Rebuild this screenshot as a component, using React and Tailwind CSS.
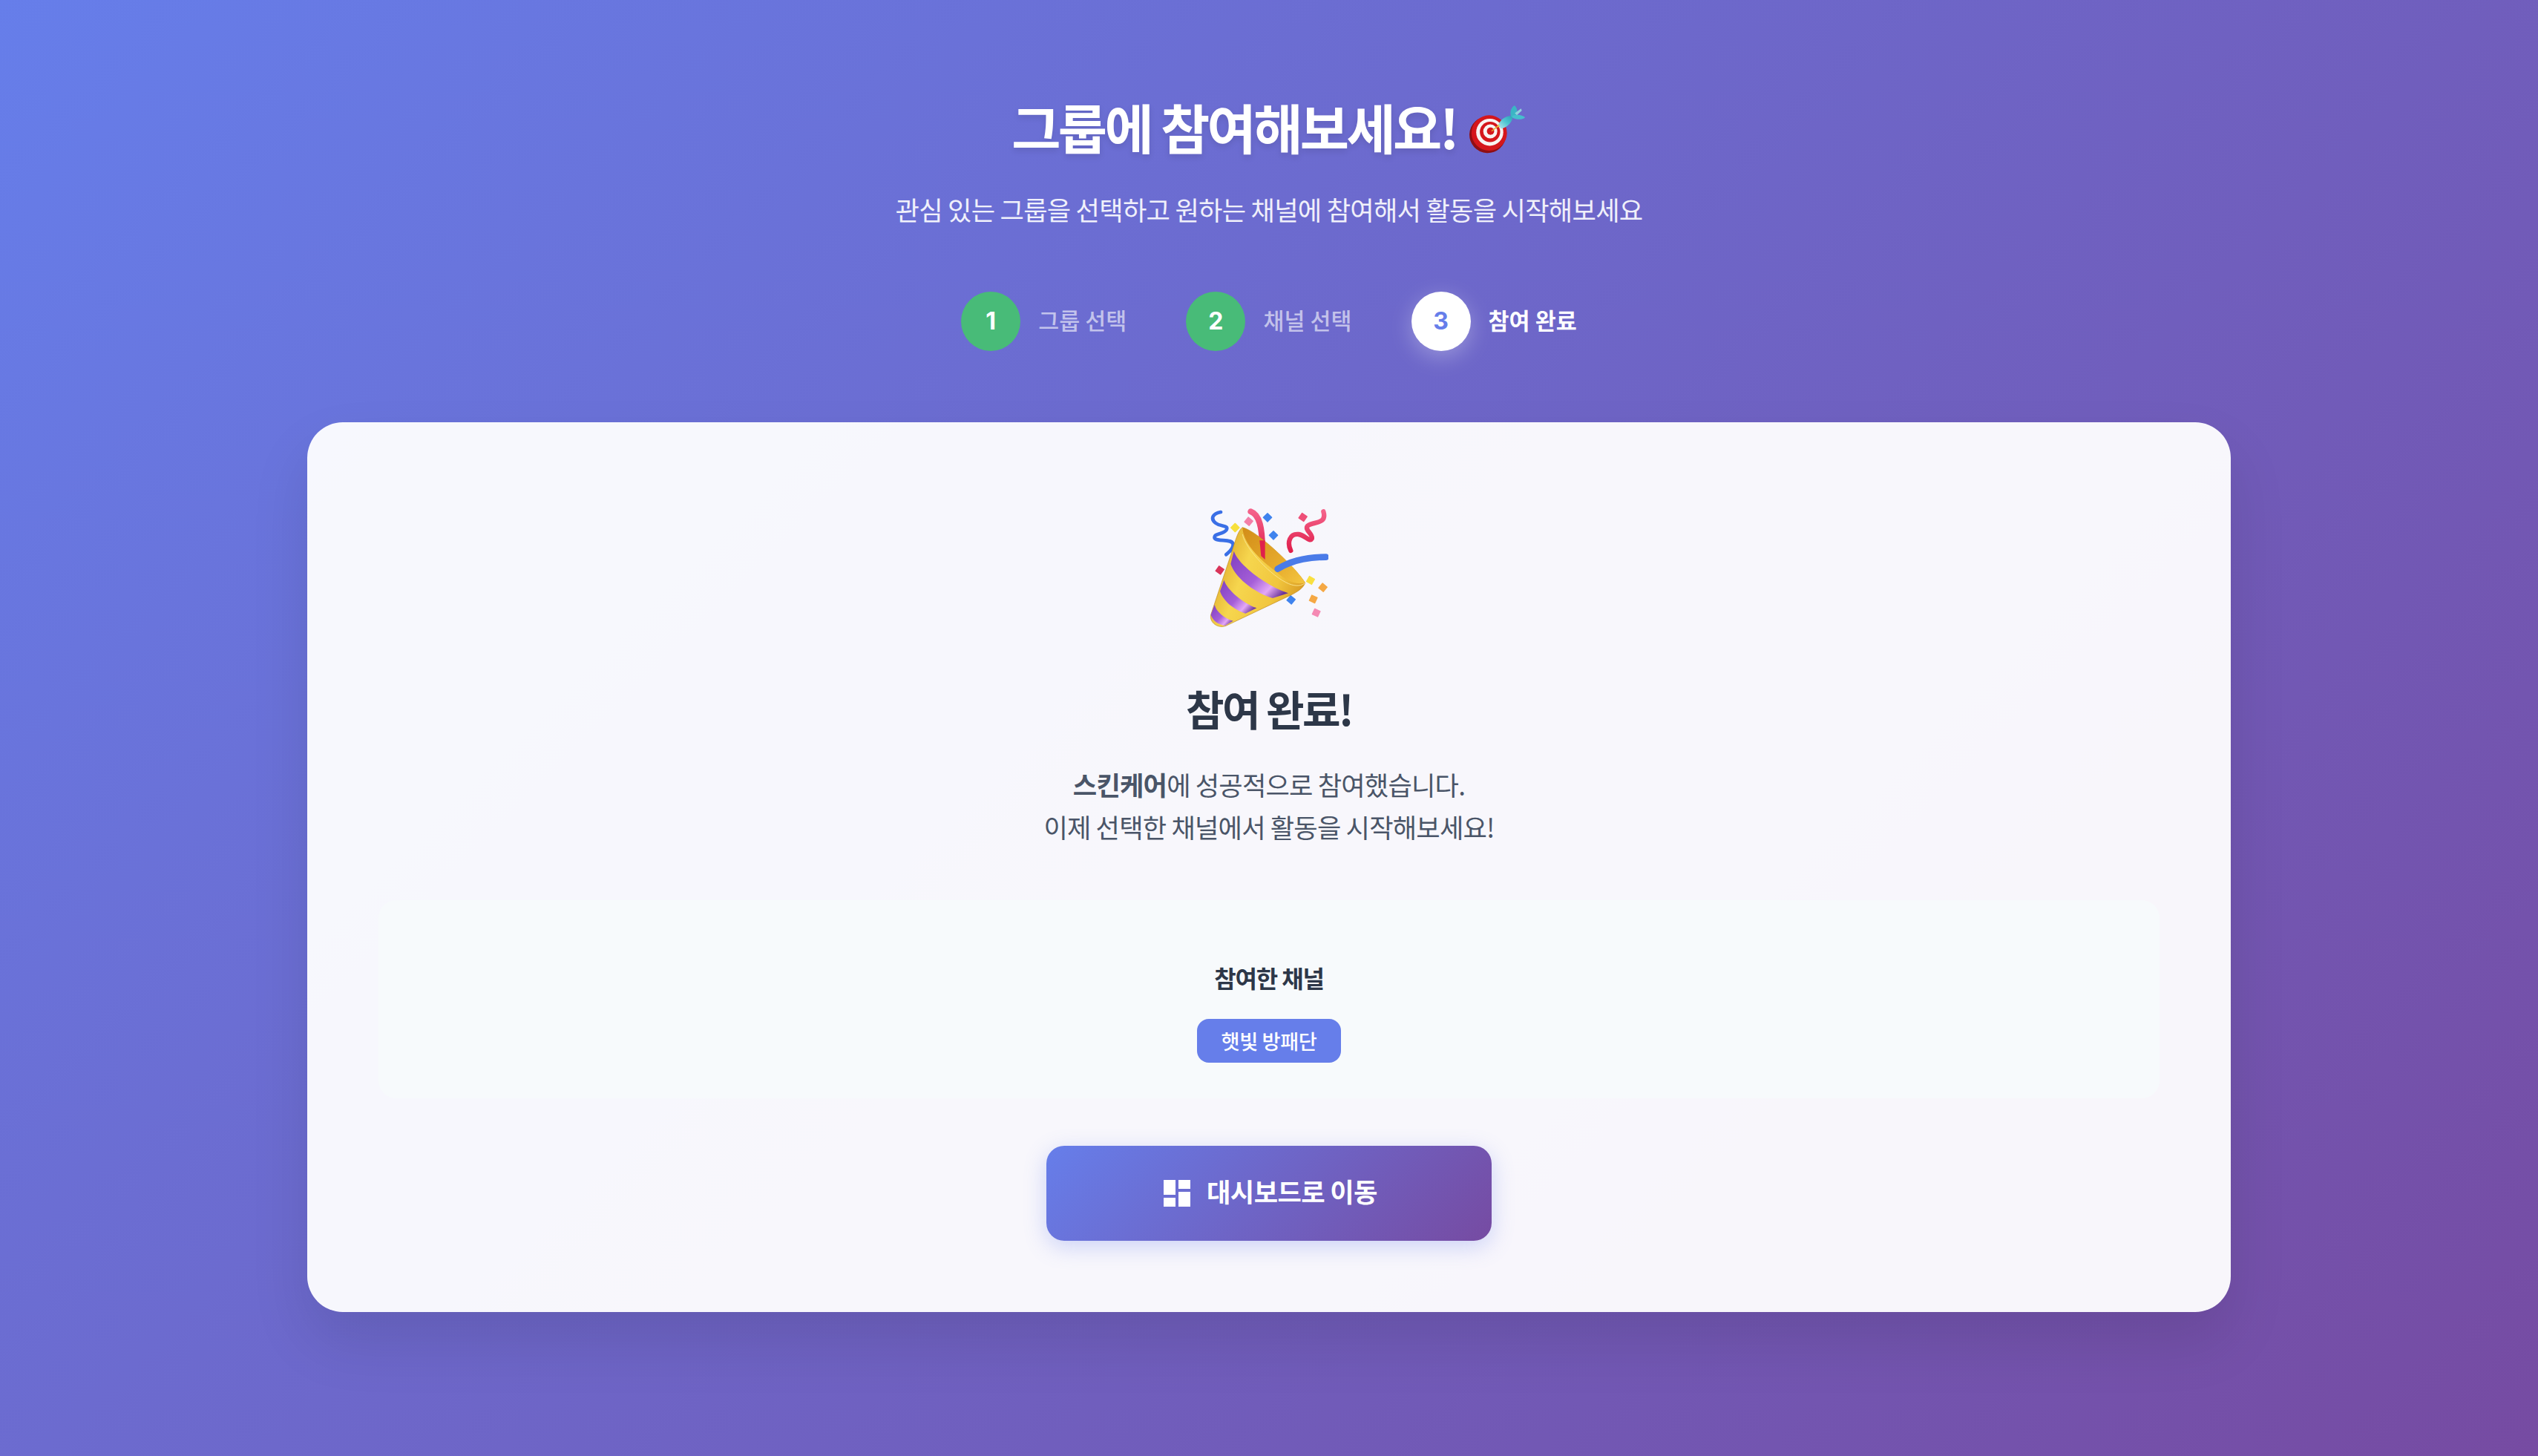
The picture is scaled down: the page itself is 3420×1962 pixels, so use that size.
import React from 'react';

const DartIcon = () => (
  <svg width="78" height="68" viewBox="95 50 222 192" className="inline-block ml-[16px] align-[-8px]">
    <defs>
      <linearGradient id="dartBody" x1="0" y1="1" x2="1" y2="0">
        <stop offset="0" stopColor="#bfe9ee" />
        <stop offset="0.5" stopColor="#4fc6d2" />
        <stop offset="1" stopColor="#2b9fb4" />
      </linearGradient>
    </defs>
    <ellipse cx="168" cy="165" rx="70" ry="70" fill="#8f0f14" transform="rotate(-20 168 165)" />
    <ellipse cx="174" cy="158" rx="68" ry="68" fill="#d5161b" />
    <circle cx="176" cy="155" r="52" fill="#f8f4f2" />
    <circle cx="177" cy="154" r="39" fill="#d5161b" />
    <circle cx="178" cy="152" r="27" fill="#f8f4f2" />
    <circle cx="179" cy="151" r="14" fill="#d5161b" />
    <path d="M183 151 L205 133" stroke="#e2b32a" strokeWidth="4" />
    <path d="M201 137 L212 122 L218 134 Z" fill="#edc33c" />
    <path d="M210 125 C220 100 245 90 265 92 C265 112 245 138 218 142 Z" fill="url(#dartBody)" />
    <path d="M258 96 C250 75 262 55 272 53 C284 65 284 85 272 95 Z" fill="#3bb5c4" />
    <path d="M262 92 C280 85 300 88 312 98 C300 108 278 108 262 98 Z" fill="#46bfcd" />
    <path d="M272 82 L296 64 L299 72 L280 90 Z" fill="#8fd3dc" />
  </svg>
);

const PartyPopper = () => (
  <svg width="160" height="160" viewBox="150 75 480 480" className="block mx-auto mt-[20px]">
    <defs>
      <linearGradient id="coneGold" x1="0" y1="0.3" x2="1" y2="0.7">
        <stop offset="0" stopColor="#d9a024" />
        <stop offset="0.35" stopColor="#f6d64e" />
        <stop offset="0.7" stopColor="#f1c63e" />
        <stop offset="1" stopColor="#d6951f" />
      </linearGradient>
      <linearGradient id="coneInner" x1="0" y1="0" x2="1" y2="1">
        <stop offset="0" stopColor="#d28d18" />
        <stop offset="0.6" stopColor="#e6aa2c" />
        <stop offset="1" stopColor="#f4c640" />
      </linearGradient>
      <linearGradient id="band" x1="0" y1="0" x2="1" y2="0.8">
        <stop offset="0" stopColor="#7f3fc0" />
        <stop offset="0.55" stopColor="#a55fd8" />
        <stop offset="0.8" stopColor="#e4a8f6" />
        <stop offset="1" stopColor="#6a3498" />
      </linearGradient>
      <linearGradient id="ribbon" x1="0" y1="0" x2="0" y2="1">
        <stop offset="0" stopColor="#f4628a" />
        <stop offset="1" stopColor="#e01f4c" />
      </linearGradient>
    </defs>

    {/* streamers behind the cone */}
    <path d="M195 90 C165 95 150 115 175 135 C195 150 228 142 218 162 C205 182 165 175 170 195 C180 212 245 195 245 222 C245 240 230 250 217 262" fill="none" stroke="#3a6fe6" strokeWidth="14" strokeLinecap="round" />
    <path d="M316 88 C350 100 366 150 362 262" fill="none" stroke="url(#ribbon)" strokeWidth="24" strokeLinecap="round" />
    <path d="M478 246 C462 212 474 176 510 180 C535 184 555 212 563 198 C570 180 532 162 546 146 C568 128 626 140 610 88" fill="none" stroke="url(#ribbon)" strokeWidth="19" strokeLinecap="round" strokeLinejoin="round" />

    {/* confetti */}
    <rect x="239" y="139" width="28" height="28" rx="2" fill="#f7e03c" transform="rotate(45 253 153)" />
    <rect x="294" y="114" width="28" height="28" rx="2" fill="#f37fa8" transform="rotate(40 308 128)" />
    <rect x="370" y="98" width="28" height="28" rx="2" fill="#3f83ee" transform="rotate(45 384 112)" />
    <rect x="394" y="170" width="28" height="28" rx="2" fill="#3f83ee" transform="rotate(45 408 184)" />
    <rect x="513" y="97" width="28" height="28" rx="2" fill="#ee4f78" transform="rotate(35 527 111)" />
    <rect x="177" y="311" width="28" height="28" rx="2" fill="#d9345a" transform="rotate(35 191 325)" />
    <rect x="544" y="352" width="28" height="28" rx="2" fill="#f9e040" transform="rotate(30 558 366)" />
    <rect x="594" y="381" width="28" height="28" rx="2" fill="#f5a844" transform="rotate(40 608 395)" />
    <rect x="555" y="428" width="28" height="28" rx="2" fill="#f5a844" transform="rotate(25 569 442)" />
    <rect x="465" y="431" width="28" height="28" rx="2" fill="#3f83ee" transform="rotate(40 479 445)" />
    <rect x="567" y="483" width="28" height="28" rx="2" fill="#f58ab4" transform="rotate(25 581 497)" />

    {/* cone */}
    <path d="M283 152 C268 160 255 200 240 250 L155 505 C148 538 185 562 216 550 L480 425 C510 410 530 395 536 376 C500 320 350 170 283 152 Z" fill="url(#coneGold)" stroke="#c08a1c" strokeWidth="2" />
    <path d="M283 152 C330 160 500 310 536 376 C500 385 460 370 420 332 C350 280 285 215 283 152 Z" fill="url(#coneInner)" />
    <path d="M352 205 L374 205 L374 282 L358 268 Z" fill="#e01f4c" />
    <path d="M425 320 C480 285 550 272 620 272" fill="none" stroke="#4a7be8" strokeWidth="26" strokeLinecap="round" />
    <path d="M283 180 C295 240 400 350 470 380 C500 392 525 388 536 376" fill="none" stroke="#fbe38a" strokeWidth="3" />

    {/* purple bands */}
    <path d="M248 248 C265 300 370 385 468 418 L405 438 C340 420 255 360 235 300 Z" fill="url(#band)" />
    <path d="M208 365 C222 405 280 455 340 478 L295 500 C250 485 205 450 192 410 Z" fill="url(#band)" />
    <path d="M170 465 C178 495 210 520 245 530 L212 550 C185 545 162 530 155 505 Z" fill="url(#band)" />
  </svg>
);

const DashboardIcon = () => (
  <svg width="36" height="36" viewBox="0 0 18 18" fill="#fff" className="block">
    <rect x="0" y="0" width="8" height="10" />
    <rect x="0" y="12" width="8" height="6" />
    <rect x="10" y="0" width="8" height="6" />
    <rect x="10" y="8" width="8" height="10" />
  </svg>
);

const steps = [
  { num: 1, label: '그룹 선택', done: true },
  { num: 2, label: '채널 선택', done: true },
  { num: 3, label: '참여 완료', done: false },
];

export default function App() {
  return (
    <div className="min-h-screen bg-[linear-gradient(135deg,#667eea_0%,#764ba2_100%)] pt-[112px] font-['Noto_Sans_CJK_KR','Inter',sans-serif] leading-[1.6]">
      <div className="mx-auto w-[2592px]">
        {/* Header */}
        <div className="text-center text-white">
          <h1 className="mb-[27px] text-[72px] font-bold leading-[115px] tracking-[-3.6px] [text-shadow:0_4px_8px_rgba(0,0,0,0.1)]">
            그룹에 참여해보세요!
            <DartIcon />
          </h1>
          <p className="text-[35.2px] leading-[56px] tracking-[-0.72px] text-white/90">
            관심 있는 그룹을 선택하고 원하는 채널에 참여해서 활동을 시작해보세요
          </p>
        </div>

        {/* Steps */}
        <div className="mt-[83px] flex justify-center gap-[80px]">
          {steps.map((step) => (
            <div key={step.num} className="flex items-center gap-[24px]">
              <div
                className={
                  step.done
                    ? "flex h-[80px] w-[80px] items-center justify-center rounded-full bg-[#48bb78] font-['Inter'] text-[32px] font-bold text-white"
                    : "flex h-[80px] w-[80px] items-center justify-center rounded-full bg-white font-['Inter'] text-[32px] font-bold text-[#667eea] shadow-[0_8px_30px_rgba(255,255,255,0.3)]"
                }
              >
                {step.num}
              </div>
              <span
                className={
                  step.done
                    ? 'pb-[4px] text-[30.4px] font-medium tracking-[0.1px] text-white/60'
                    : 'pb-[4px] text-[30.4px] font-semibold tracking-[0.1px] text-white'
                }
              >
                {step.label}
              </span>
            </div>
          ))}
        </div>

        {/* Card */}
        <div className="mt-[96px] rounded-[48px] bg-white/95 p-[96px] text-center shadow-[0_40px_80px_rgba(0,0,0,0.1)]">
          <PartyPopper />
          <h2 className="mt-[64px] text-[56px] font-bold leading-[90px] tracking-[-2.6px] text-[#2d3748]">참여 완료!</h2>
          <p className="mt-[30px] text-[35.2px] leading-[56.5px] tracking-[-0.8px] text-[#4a5568]">
            <strong className="font-bold">스킨케어</strong>에 성공적으로 참여했습니다.
            <br />
            이제 선택한 채널에서 활동을 시작해보세요!
          </p>

          <div className="mt-[71px] flex flex-col items-center rounded-[24px] bg-[#f7fafc] pb-[48px] pt-[80px]">
            <h4 className="pb-[2px] text-[32px] font-semibold leading-[49px] tracking-[-1.2px] text-[#2d3748]">참여한 채널</h4>
            <span className="mt-[29px] rounded-[16px] bg-[#667eea] px-[33px] py-[8px] text-[27.2px] font-medium leading-[43px] tracking-[-0.4px] text-white">
              햇빛 방패단
            </span>
          </div>

          <button className="mx-auto mt-[64px] flex h-[128px] w-[600px] items-center justify-center gap-[22px] rounded-[24px] bg-[linear-gradient(135deg,#667eea_0%,#764ba2_100%)] pl-[4px] text-[35.2px] font-semibold tracking-[-0.6px] text-white shadow-[0_8px_30px_rgba(102,126,234,0.3)]">
            <DashboardIcon />
            <span className="pb-[6px]">대시보드로 이동</span>
          </button>
        </div>
      </div>
    </div>
  );
}
